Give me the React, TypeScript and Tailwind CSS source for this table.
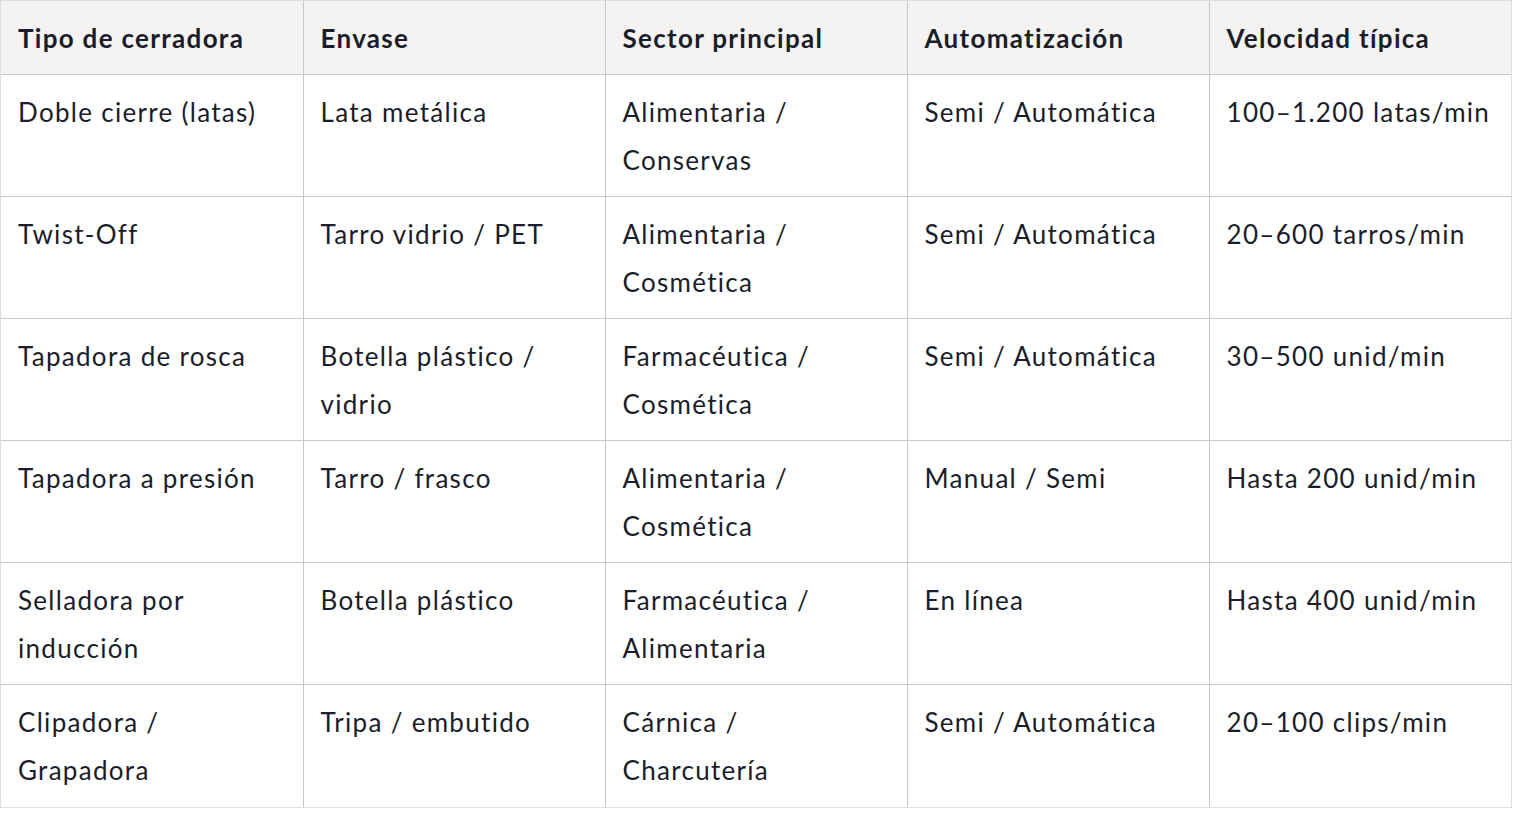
const headers = ['Tipo de cerradora', 'Envase', 'Sector principal', 'Automatización', 'Velocidad típica'];

const rows: string[][] = [
  ['Doble cierre (latas)', 'Lata metálica', 'Alimentaria / Conservas', 'Semi / Automática', '100–1.200 latas/min'],
  ['Twist-Off', 'Tarro vidrio / PET', 'Alimentaria / Cosmética', 'Semi / Automática', '20–600 tarros/min'],
  ['Tapadora de rosca', 'Botella plástico / vidrio', 'Farmacéutica / Cosmética', 'Semi / Automática', '30–500 unid/min'],
  ['Tapadora a presión', 'Tarro / frasco', 'Alimentaria / Cosmética', 'Manual / Semi', 'Hasta 200 unid/min'],
  ['Selladora por inducción', 'Botella plástico', 'Farmacéutica / Alimentaria', 'En línea', 'Hasta 400 unid/min'],
  ['Clipadora / Grapadora', 'Tripa / embutido', 'Cárnica / Charcutería', 'Semi / Automática', '20–100 clips/min'],
];

export default function App()
{
  return (
    <div className="bg-white min-h-screen" style={{ fontFamily: 'Lato, "Noto Sans", sans-serif' }}>
      <div className="w-[1512px] border border-[#dedede]">
        <table className="w-full border-collapse table-fixed text-[26px] leading-[48px] tracking-[0.05em] text-[#1b1d2a]">
          <thead>
            <tr className="bg-[#f4f3f1]">
              {headers.map((h, i) => (
                <th
                  key={h}
                  className={`text-left font-bold pl-[17px] pr-[18px] pt-[13px] pb-[12px] border-b border-[#cbc7c3] ${i < headers.length - 1 ? 'border-r' : ''}`}
                >
                  {h}
                </th>
              ))}
            </tr>
          </thead>
          <tbody>
            {rows.map((row, r) => (
              <tr key={r}>
                {row.map((cell, i) => (
                  <td
                    key={i}
                    className={`align-top font-normal pl-[17px] pr-[18px] pt-[13px] pb-[12px] h-[122px] border-[#cbc7c3] ${r < rows.length - 1 ? 'border-b' : ''} ${i < row.length - 1 ? 'border-r' : ''}`}
                  >
                    {cell}
                  </td>
                ))}
              </tr>
            ))}
          </tbody>
        </table>
      </div>
    </div>
  );
}
